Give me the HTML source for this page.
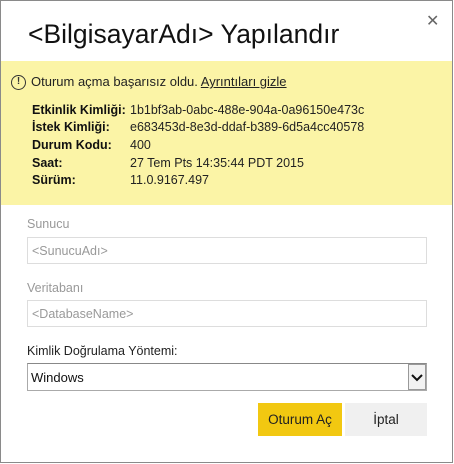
<!DOCTYPE html>
<html><head><meta charset="utf-8"><style>
*{margin:0;padding:0;box-sizing:border-box}
body{width:454px;height:464px;background:#fff;font-family:"Liberation Sans","DejaVu Sans",sans-serif;position:relative;overflow:hidden;color:#222}
.frame{position:absolute;left:0;top:0;width:453px;height:463px;border:1px solid #8a8a8a}
.abs{position:absolute;white-space:nowrap}
.title{left:28px;top:19px;font-size:26.5px;color:#111;letter-spacing:0}
.close{left:426px;top:11px;font-size:16px;color:#666}
.band{position:absolute;left:1px;top:61px;width:451px;height:144px;background:#fbf4a6}
.warn{left:31px;top:74px;font-size:13px;color:#222}
.warn u{text-decoration:underline}
.icon{position:absolute;left:11px;top:75px;width:15px;height:15px;border:1.3px solid #333;border-radius:50%;font-size:10px;font-weight:bold;text-align:center;line-height:12px;color:#333}
.lab{left:32px;font-size:12.5px;font-weight:bold;color:#111}
.val{left:130px;font-size:12.5px;color:#222}
.fl{left:27px;font-size:12.5px;color:#999}
.inp{position:absolute;left:27px;width:400px;height:27px;border:1px solid #ddd;background:#fff;font-size:12.5px;color:#999;padding:6px 4px}
.sel{position:absolute;left:27px;top:363px;width:400px;height:28px;border:1px solid #aaa;border-top-color:#888;font-size:13px;color:#111;padding:6px 3px}
.dd{position:absolute;left:408px;top:364px;width:18px;height:26px;border:1px solid #999;background:#f2f2f2}
.btn{position:absolute;top:403px;height:33px;font-size:13.5px;text-align:center;line-height:33px;color:#222}
</style></head><body>
<div class="frame"></div>
<div class="abs title">&lt;BilgisayarAdı&gt; Yapılandır</div>
<div class="abs close">✕</div>
<div class="band"></div>
<div class="icon">!</div>
<div class="abs warn">Oturum açma başarısız oldu. <u>Ayrıntıları gizle</u></div>
<div class="abs lab" style="top:103px">Etkinlik Kimliği:</div><div class="abs val" style="top:103px">1b1bf3ab-0abc-488e-904a-0a96150e473c</div>
<div class="abs lab" style="top:120px">İstek Kimliği:</div><div class="abs val" style="top:120px">e683453d-8e3d-ddaf-b389-6d5a4cc40578</div>
<div class="abs lab" style="top:138px">Durum Kodu:</div><div class="abs val" style="top:138px">400</div>
<div class="abs lab" style="top:156px">Saat:</div><div class="abs val" style="top:156px">27 Tem Pts 14:35:44 PDT 2015</div>
<div class="abs lab" style="top:173px">Sürüm:</div><div class="abs val" style="top:173px">11.0.9167.497</div>
<div class="abs fl" style="top:217px">Sunucu</div>
<div class="inp" style="top:237px">&lt;SunucuAdı&gt;</div>
<div class="abs fl" style="top:281px">Veritabanı</div>
<div class="inp" style="top:300px">&lt;DatabaseName&gt;</div>
<div class="abs fl" style="top:344px;color:#222">Kimlik Doğrulama Yöntemi:</div>
<div class="sel">Windows</div>
<div class="dd"><svg width="16" height="24" viewBox="0 0 16 24"><path d="M3 10l5 5 5-5" fill="none" stroke="#111" stroke-width="2"/></svg></div>
<div class="btn" style="left:258px;width:84px;background:#f2c811">Oturum Aç</div>
<div class="btn" style="left:345px;width:82px;background:#f0f0f0">İptal</div>
</body></html>
